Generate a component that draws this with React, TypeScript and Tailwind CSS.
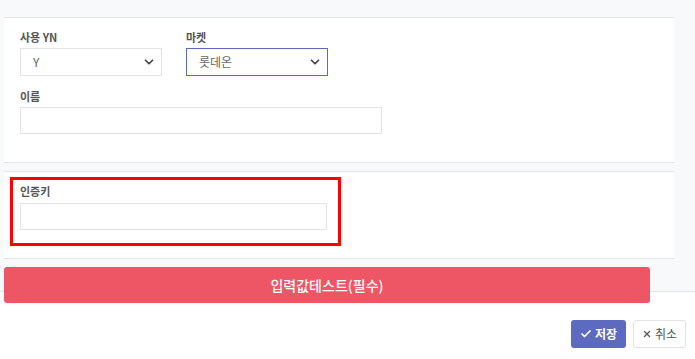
import { Check, ChevronDown, X } from "lucide-react";

const font = { fontFamily: '"Noto Sans CJK KR", "Noto Sans", sans-serif' };

function Label({ children, className = "" }: { children: React.ReactNode; className?: string }) {
  return (
    <div className={`h-[14px] text-[11px] leading-[14px] font-bold text-[#555] ${className}`}>
      {children}
    </div>
  );
}

function Select({ value, active }: { value: string; active?: boolean }) {
  return (
    <div
      className={`flex h-[28px] w-[142px] items-center justify-between border bg-white pl-3 pr-[5px] text-[12px] text-[#666] ${
        active ? "border-[#5c6bc0]" : "border-[#e2e2e2]"
      }`}
    >
      <span>{value}</span>
      <ChevronDown size={14} strokeWidth={3} className="text-[#444]" />
    </div>
  );
}

export default function App() {
  return (
    <div className="h-[359px] w-[695px] bg-white" style={font}>
      {/* modal body */}
      <div className="border-b border-[#e4e6ea] bg-[#f8f9fb] pt-[17px] pl-[4px] pr-[21px]">
        <section className="border-y border-[#e4e6ea] bg-white px-4 pt-[12px] pb-[28px]">
          <div className="flex gap-6">
            <div>
              <Label>사용 YN</Label>
              <div className="mt-1">
                <Select value="Y" />
              </div>
            </div>
            <div>
              <Label>마켓</Label>
              <div className="mt-1">
                <Select value="롯데온" active />
              </div>
            </div>
          </div>
          <Label className="mt-[13px]">이름</Label>
          <div className="mt-1 h-[27px] w-[362px] border border-[#e2e2e2] bg-white" />
        </section>

        <section className="mt-2 border-y border-[#e4e6ea] bg-white pt-[5px] pb-[12px] pl-[6px]">
          <div className="w-[331px] border-[3px] border-[#ff0000] pt-1 pb-[13px] pl-[7px]">
            <Label>인증키</Label>
            <div className="mt-[5px] h-[27px] w-[307px] border border-[#e2e2e2] bg-white" />
          </div>
        </section>

        <button className="relative mt-2 -mb-3 flex h-[36px] w-[646px] items-center justify-center rounded-[3px] bg-[#ee5565] text-[14px] font-medium text-white">
          입력값테스트(필수)
        </button>
      </div>

      {/* footer */}
      <div className="flex justify-end gap-[7px] pt-[28px] pr-[9px]">
        <button className="flex h-[28px] w-[55px] items-center justify-center gap-[3px] rounded-[3px] bg-[#5c6bc0] text-[12px] font-bold text-white">
          <Check size={12} strokeWidth={3.5} />
          저장
        </button>
        <button className="flex h-[28px] w-[53px] items-center justify-center gap-[3px] rounded-[3px] border border-[#e2e2e2] bg-white text-[12px] text-[#555]">
          <X size={10} strokeWidth={3} />
          취소
        </button>
      </div>
    </div>
  );
}
